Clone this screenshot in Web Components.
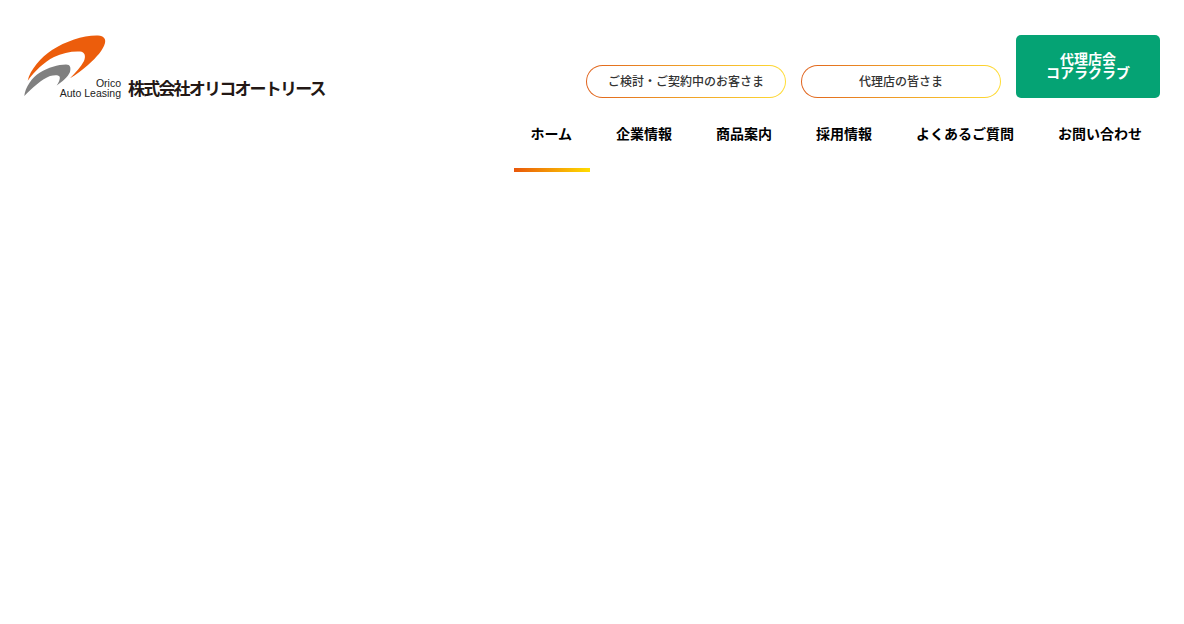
<!DOCTYPE html>
<html lang="ja">
<head>
<meta charset="utf-8">
<title>オリコオートリース</title>
<style>
  html, body {
    margin: 0;
    background: #fff;
    font-family: "Noto Sans CJK JP", "Noto Sans", sans-serif;
  }
</style>
</head>
<body>
<site-header>
  <site-logo slot="logo"></site-logo>
  <pill-link slot="actions">ご検討・ご契約中のお客さま</pill-link>
  <pill-link slot="actions">代理店の皆さま</pill-link>
  <club-button slot="actions">代理店会<br>コアラクラブ</club-button>
  <nav-item slot="nav" active>ホーム</nav-item>
  <nav-item slot="nav">企業情報</nav-item>
  <nav-item slot="nav">商品案内</nav-item>
  <nav-item slot="nav">採用情報</nav-item>
  <nav-item slot="nav">よくあるご質問</nav-item>
  <nav-item slot="nav">お問い合わせ</nav-item>
</site-header>

<script>
class SiteHeader extends HTMLElement {
  constructor() {
    super();
    this.attachShadow({ mode: 'open' }).innerHTML = `
      <style>
        :host {
          display: block;
          padding: 35px 24px 0;
        }
        .top {
          display: flex;
          justify-content: space-between;
          align-items: flex-end;
          height: 63px;
        }
        .actions {
          display: flex;
          align-items: flex-end;
          gap: 15px;
        }
        .nav {
          display: flex;
          justify-content: flex-end;
          gap: 10px;
          height: 74px;
        }
      </style>
      <div class="top">
        <slot name="logo"></slot>
        <div class="actions"><slot name="actions"></slot></div>
      </div>
      <div class="nav"><slot name="nav"></slot></div>`;
  }
}

class SiteLogo extends HTMLElement {
  constructor() {
    super();
    this.attachShadow({ mode: 'open' }).innerHTML = `
      <style>
        :host {
          display: flex;
          align-items: flex-end;
          height: 65px;
          margin-bottom: -2px;
        }
        svg {
          display: block;
          flex: none;
        }
        .en {
          flex: none;
          width: 66px;
          margin: 0 0 2px -51px;
          font: 10.5px/10px "Liberation Sans", sans-serif;
          text-align: right;
          white-space: nowrap;
          color: #222;
        }
        .ja {
          flex: none;
          margin: 0 0 1px 7px;
          font-size: 17px;
          line-height: 22px;
          font-weight: 700;
          letter-spacing: -1.8px;
          color: #231815;
          white-space: nowrap;
        }
      </style>
      <svg width="82" height="65" viewBox="24 35 82 65" aria-hidden="true">
        <path fill="#ec5d0c" d="M27.7 80.7C30 70 41 57 52 50C66 41 84 35 98 35.5C104 36 106 39 105 43C103 50 97 57 88 65C82 70 76 75 70 78.3C76 72 81 67 84 61C86 56 85 52 80 51.5C72 51 62 53 54 57C44 62 35 71 27.7 80.7Z"/>
        <path fill="#808080" d="M24.3 96C25 88 32 77 40 72.5C48 67.5 58 64.5 66 64.5C70.500 64.500 71 68 70 72C68 77 62 82 56.700 85.500C59 82 60.500 78.500 59.500 76.500C58 74.500 54 75 50 76C42 79 32 88 24.3 96Z"/>
      </svg>
      <div class="en">Orico<br>Auto Leasing</div>
      <div class="ja">株式会社オリコオートリース</div>`;
  }
}

class PillLink extends HTMLElement {
  constructor() {
    super();
    this.attachShadow({ mode: 'open' }).innerHTML = `
      <style>
        :host {
          display: flex;
          box-sizing: border-box;
          width: 200px;
          height: 33px;
          padding-bottom: 2px;
          align-items: center;
          justify-content: center;
          border: 1px solid transparent;
          border-radius: 17px;
          background:
            linear-gradient(#fff, #fff) padding-box,
            linear-gradient(90deg, #e0621c, #ffdd33) border-box;
          font-size: 12px;
          font-weight: 500;
          color: #333;
          white-space: nowrap;
        }
      </style>
      <slot></slot>`;
  }
}

class ClubButton extends HTMLElement {
  constructor() {
    super();
    this.attachShadow({ mode: 'open' }).innerHTML = `
      <style>
        :host {
          display: flex;
          box-sizing: border-box;
          width: 144px;
          height: 63px;
          padding-bottom: 4px;
          align-items: center;
          justify-content: center;
          border-radius: 5px;
          background: #05a374;
          color: #fff;
          font-size: 14px;
          font-weight: 700;
          line-height: 14px;
          text-align: center;
        }
      </style>
      <div><slot></slot></div>`;
  }
}

class NavItem extends HTMLElement {
  constructor() {
    super();
    this.attachShadow({ mode: 'open' }).innerHTML = `
      <style>
        :host {
          display: flex;
          flex-direction: column;
          color: #000;
          font-size: 14px;
          font-weight: 700;
          white-space: nowrap;
        }
        .label {
          flex: 1;
          display: flex;
          align-items: center;
          padding: 0 18px 1px 16px;
        }
        .bar {
          height: 4px;
        }
        :host([active]) .bar {
          background: linear-gradient(90deg, #e9570a, #ffdd00);
        }
      </style>
      <div class="label"><slot></slot></div>
      <div class="bar"></div>`;
  }
}

customElements.define('site-header', SiteHeader);
customElements.define('site-logo', SiteLogo);
customElements.define('pill-link', PillLink);
customElements.define('club-button', ClubButton);
customElements.define('nav-item', NavItem);
</script>
</body>
</html>
